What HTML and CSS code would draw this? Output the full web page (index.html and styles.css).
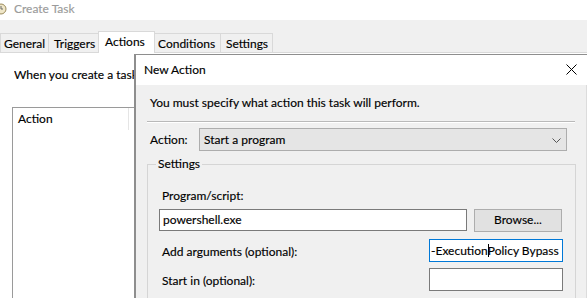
FILE: index.html
```html
<!DOCTYPE html>
<html>
<head>
<meta charset="utf-8">
<link rel="stylesheet" href="styles.css">
</head>
<body>
<div class="window">
  <div class="titlebar">
    <svg class="app-icon" width="10" height="12" viewBox="0 0 10 12">
      <circle cx="1" cy="6" r="5" fill="#efe6c8" stroke="#9a8a5a" stroke-width="1"/>
      <path d="M1 3 V6 H3" fill="none" stroke="#6a6a6a" stroke-width="1"/>
    </svg>
    <span class="title">Create Task</span>
  </div>
  <div class="tabstrip">
    <div class="tab tab-general">General</div>
    <div class="tab tab-triggers">Triggers</div>
    <div class="tab tab-actions selected">Actions</div>
    <div class="tab tab-conditions">Conditions</div>
    <div class="tab tab-settings">Settings</div>
  </div>
  <div class="tabpage">
    <p class="intro">When you create a task, you must specify the action that will occur when your task starts.</p>
    <div class="listbox">
      <div class="lb-header">
        <div class="lb-col">Action</div>
        <div class="lb-col lb-col2"></div>
      </div>
    </div>
  </div>

  <div class="dialog">
    <div class="dlg-title">
      <span class="dlg-title-text">New Action</span>
      <svg class="close" width="11" height="11" viewBox="0 0 11 11">
        <path d="M0.5 0.5 L10.5 10.5 M10.5 0.5 L0.5 10.5" stroke="#000" stroke-width="1" fill="none"/>
      </svg>
    </div>
    <div class="dlg-body">
      <p class="prompt">You must specify what action this task will perform.</p>
      <div class="separator"></div>
      <div class="action-row">
        <span class="action-label">Action:</span>
        <div class="combo">
          <span class="combo-text">Start a program</span>
          <svg class="chevron" width="9" height="5" viewBox="0 0 9 5">
            <path d="M0.5 0.5 L4.5 4.5 L8.5 0.5" stroke="#555" stroke-width="1" fill="none"/>
          </svg>
        </div>
      </div>
      <fieldset class="group">
        <legend class="group-legend">Settings</legend>
        <div class="field-label">Program/script:</div>
        <div class="program-row">
          <div class="textbox program-box">powershell.exe</div>
          <div class="button">Browse...</div>
        </div>
        <div class="opt-row">
          <span class="opt-label">Add arguments (optional):</span>
          <div class="textbox opt-box focused">-Execution<span class="caret"></span>Policy Bypass</div>
        </div>
        <div class="opt-row opt-row-last">
          <span class="opt-label">Start in (optional):</span>
          <div class="textbox opt-box"></div>
        </div>
      </fieldset>
    </div>
  </div>
</div>
</body>
</html>
```

FILE: styles.css
```css
* { box-sizing: border-box; }

html, body {
  margin: 0;
  padding: 0;
}

body {
  width: 587px;
  height: 298px;
  overflow: hidden;
  background: #ffffff;
  font-family: "Lato", "Noto Sans", sans-serif;
  font-size: 12px;
  line-height: 16px;
  color: #000;
  -webkit-text-stroke: 0.15px currentColor;
}

.window {
  position: relative;
  width: 587px;
  height: 298px;
  overflow: hidden;
}

/* Title bar */
.titlebar {
  height: 20px;
  background: #fff;
  display: flex;
  align-items: center;
}

.app-icon {
  flex: none;
  margin-top: -2px;
}

.title {
  margin-left: 4px;
  color: #9b9b9b;
  font-size: 12px;
  margin-top: -3px;
}

/* Tabs */
.tabstrip {
  height: 33px;
  background: #f0f0f0;
  border-bottom: 1px solid #d9d9d9;
  display: flex;
  align-items: flex-end;
}

.tab {
  height: 19px;
  border: 1px solid #d9d9d9;
  border-bottom: none;
  background: #f0f0f0;
  padding: 2px 4px 0 3px;
  margin-left: -1px;
  white-space: nowrap;
}

.tab-general { margin-left: 0; width: 49px; }
.tab-triggers { width: 53px; padding-left: 5px; }
.tab-conditions { width: 69px; padding-left: 5px; }
.tab-settings { width: 53px; padding-left: 5px; }

.tab.selected {
  position: relative;
  z-index: 1;
  height: 22px;
  width: 57px;
  margin: 0 -2px -1px -3px;
  background: #fff;
  padding: 2px 4px 0 6px;
}

/* Tab page */
.tabpage {
  padding: 14px 0 0 12px;
  background: #fff;
}

.intro {
  margin: 0 0 0 2px;
  width: 120px;
  overflow: hidden;
  white-space: nowrap;
}

.listbox {
  margin-top: 24px;
  width: 122px;
  height: 220px;
  border: 1px solid #9a9a9a;
  border-right: none;
  background: #fff;
}

.lb-header {
  display: flex;
  height: 22px;
}

.lb-col {
  width: 119px;
  padding: 3px 0 0 5px;
  border-right: 1px solid #e5e5e5;
}

.lb-col2 {
  width: auto;
  flex: 1;
  border-right: none;
}

/* Dialog */
.dialog {
  position: absolute;
  left: 134px;
  top: 54px;
  width: 454px;
  height: 250px;
  border-left: 2px solid #8e8e8e;
  border-top: 1px solid #8e8e8e;
  background: #fff;
  display: flex;
  flex-direction: column;
}

.dlg-title {
  height: 30px;
  flex: none;
  display: flex;
  align-items: center;
  justify-content: space-between;
  padding: 0 11px 0 8px;
  background: #fff;
}

.dlg-title-text {
  margin-top: -1px;
}

.close {
  margin-top: -1px;
}

.dlg-body {
  flex: 1;
  background: #f0f0f0;
  padding: 10px 0 0 0;
  width: 451px;
  border-right: 1px solid #dcdcdc;
}

.prompt {
  margin: 0 0 0 14px;
  white-space: nowrap;
}

.separator {
  margin: 10px 0 0 11px;
  width: 428px;
  height: 2px;
  border-top: 1px solid #b9b9b9;
  border-bottom: 1px solid #fff;
}

.action-row {
  display: flex;
  align-items: center;
  margin: 5px 0 0 14px;
}

.action-label {
  width: 49px;
  flex: none;
}

.combo {
  width: 368px;
  height: 23px;
  background: #e5e5e5;
  border: 1px solid #adadad;
  display: flex;
  align-items: center;
  justify-content: space-between;
  padding: 0 5px 0 4px;
}

.chevron { margin-top: 1px; }

.group {
  margin: 5px 0 0 11px;
  padding: 0 12px 30px 14px;
  width: 429px;
  border: 1px solid #d5d5d5;
  min-width: 0;
}

.group-legend {
  padding: 0 2px;
  margin-left: -6px;
}

.field-label {
  margin-top: 16px;
}

.program-row {
  display: flex;
  margin: 5px 0 0 -3px;
  gap: 7px;
}

.textbox {
  background: #fff;
  border: 1px solid #7a7a7a;
  white-space: nowrap;
  overflow: hidden;
}

.program-box {
  flex: 1;
  height: 22px;
  padding: 2px 0 0 3px;
}

.button {
  width: 88px;
  height: 23px;
  flex: none;
  margin-right: 1px;
  background: #e1e1e1;
  border: 1px solid #adadad;
  display: flex;
  align-items: center;
  justify-content: center;
  padding-bottom: 1px;
}

.opt-row {
  display: flex;
  align-items: center;
  justify-content: space-between;
  margin-top: 7px;
}

.opt-row-last {
  margin-top: 6px;
}

.opt-label {
  padding-top: 2px;
}

.opt-box {
  width: 134px;
  height: 23px;
  padding: 3px 0 0 1px;
}

.focused {
  border-color: #0078d7;
}

.caret {
  display: inline-block;
  width: 1px;
  height: 13px;
  background: #000;
  vertical-align: -2px;
  margin-right: -1px;
}
```
